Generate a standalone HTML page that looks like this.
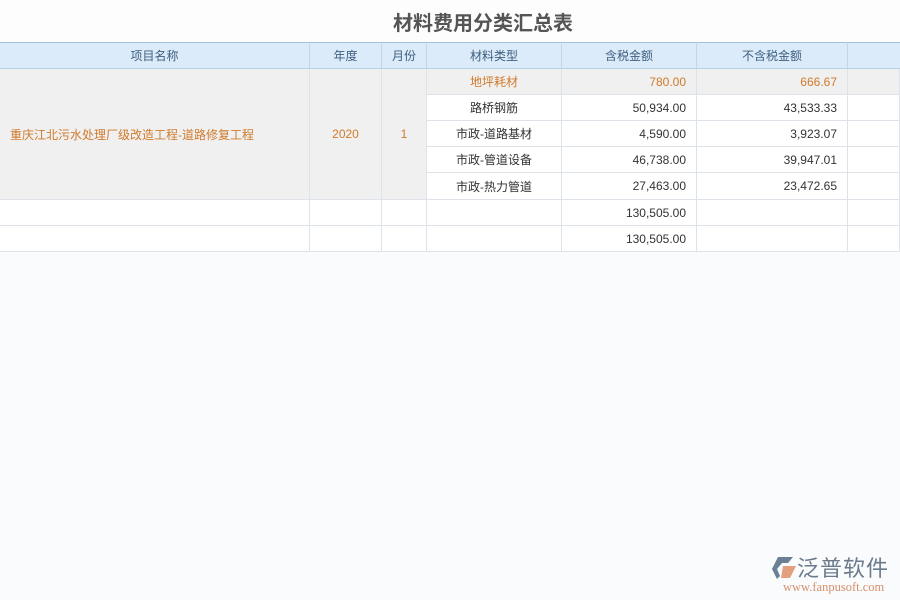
<!DOCTYPE html>
<html><head><meta charset="utf-8"><style>
*{margin:0;padding:0;box-sizing:border-box}
body{width:900px;height:600px;background:#f9fbfc;font-family:"Liberation Sans","Noto Sans CJK SC",sans-serif;position:relative;overflow:hidden;font-size:12px;color:#333}
.t{position:absolute;left:393px;top:7px;font-size:20px;font-weight:bold;color:#555}
.c{position:absolute;border-right:1px solid #dde3e8;border-bottom:1px solid #dde3e8;display:flex;align-items:center;padding:0 10px;white-space:nowrap}
.h{background:#dcebf9;color:#3d5f80;justify-content:center;border-right:1px solid #c3d7e8;border-bottom:1px solid #b7d0e6;border-top:1px solid #9ec2e0}
.g{background:#f0f0f0}
.w{background:#fff}
.o{color:#d07a2b}
.ct{justify-content:center}.r{justify-content:flex-end}
</style></head><body>
<div style="position:absolute;left:0;top:0;width:900px;height:42px;background:#fdfdfd"></div>
<div class="t">材料费用分类汇总表</div>
<div class="c h" style="left:0;top:42px;width:310px;height:27px">项目名称</div>
<div class="c h" style="left:310px;top:42px;width:72px;height:27px">年度</div>
<div class="c h" style="left:382px;top:42px;width:45px;height:27px">月份</div>
<div class="c h" style="left:427px;top:42px;width:135px;height:27px">材料类型</div>
<div class="c h" style="left:562px;top:42px;width:135px;height:27px">含税金额</div>
<div class="c h" style="left:697px;top:42px;width:151px;height:27px">不含税金额</div>
<div class="c h" style="left:848px;top:42px;width:52px;height:27px;border-right:none"></div>
<div class="c g o" style="left:0;top:69px;width:310px;height:131px">重庆江北污水处理厂级改造工程-道路修复工程</div>
<div class="c g o ct" style="left:310px;top:69px;width:72px;height:131px">2020</div>
<div class="c g o ct" style="left:382px;top:69px;width:45px;height:131px">1</div>
<div class="c g o ct" style="left:427px;top:69px;width:135px;height:26px">地坪耗材</div>
<div class="c g o r" style="left:562px;top:69px;width:135px;height:26px">780.00</div>
<div class="c g o r" style="left:697px;top:69px;width:151px;height:26px">666.67</div>
<div class="c g" style="left:848px;top:69px;width:52px;height:26px"></div>
<div class="c w ct" style="left:427px;top:95px;width:135px;height:26px">路桥钢筋</div>
<div class="c w r" style="left:562px;top:95px;width:135px;height:26px">50,934.00</div>
<div class="c w r" style="left:697px;top:95px;width:151px;height:26px">43,533.33</div>
<div class="c w" style="left:848px;top:95px;width:52px;height:26px"></div>
<div class="c w ct" style="left:427px;top:121px;width:135px;height:26px">市政-道路基材</div>
<div class="c w r" style="left:562px;top:121px;width:135px;height:26px">4,590.00</div>
<div class="c w r" style="left:697px;top:121px;width:151px;height:26px">3,923.07</div>
<div class="c w" style="left:848px;top:121px;width:52px;height:26px"></div>
<div class="c w ct" style="left:427px;top:147px;width:135px;height:26px">市政-管道设备</div>
<div class="c w r" style="left:562px;top:147px;width:135px;height:26px">46,738.00</div>
<div class="c w r" style="left:697px;top:147px;width:151px;height:26px">39,947.01</div>
<div class="c w" style="left:848px;top:147px;width:52px;height:26px"></div>
<div class="c w ct" style="left:427px;top:173px;width:135px;height:27px">市政-热力管道</div>
<div class="c w r" style="left:562px;top:173px;width:135px;height:27px">27,463.00</div>
<div class="c w r" style="left:697px;top:173px;width:151px;height:27px">23,472.65</div>
<div class="c w" style="left:848px;top:173px;width:52px;height:27px"></div>
<div class="c w" style="left:0;top:200px;width:310px;height:26px"></div>
<div class="c w" style="left:310px;top:200px;width:72px;height:26px"></div>
<div class="c w" style="left:382px;top:200px;width:45px;height:26px"></div>
<div class="c w" style="left:427px;top:200px;width:135px;height:26px"></div>
<div class="c w r" style="left:562px;top:200px;width:135px;height:26px">130,505.00</div>
<div class="c w" style="left:697px;top:200px;width:151px;height:26px"></div>
<div class="c w" style="left:848px;top:200px;width:52px;height:26px"></div>
<div class="c w" style="left:0;top:226px;width:310px;height:26px"></div>
<div class="c w" style="left:310px;top:226px;width:72px;height:26px"></div>
<div class="c w" style="left:382px;top:226px;width:45px;height:26px"></div>
<div class="c w" style="left:427px;top:226px;width:135px;height:26px"></div>
<div class="c w r" style="left:562px;top:226px;width:135px;height:26px">130,505.00</div>
<div class="c w" style="left:697px;top:226px;width:151px;height:26px"></div>
<div class="c w" style="left:848px;top:226px;width:52px;height:26px"></div>
<svg style="position:absolute;left:771px;top:556px" width="28" height="24" viewBox="0 0 28 24">
<path d="M7 1 L22 1 L17 7 L11 7 L6 13 L9 20 L6 23 L1 13 Z" fill="#6b7f95"/>
<path d="M12 10 L25 10 L19 22 L10 22 Z" fill="#e4a07e"/>
</svg>
<div style="position:absolute;left:797px;top:551px;font-size:22px;color:#6b7b8c;letter-spacing:1px">泛普软件</div>
<div style="position:absolute;left:783px;top:580px;font-size:12.5px;color:#d4906b;font-family:'Liberation Serif',serif">www.fanpusoft.com</div>
</body></html>
